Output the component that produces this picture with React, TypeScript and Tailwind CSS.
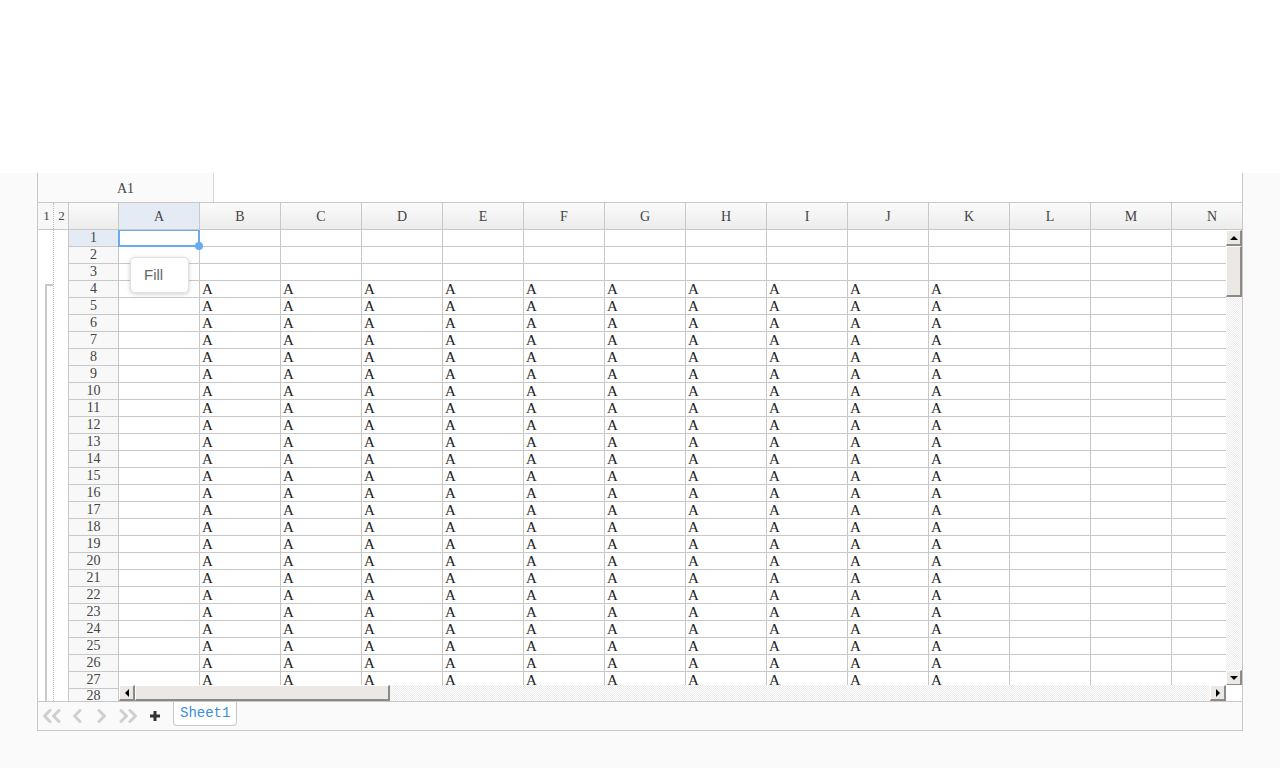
const cols = ["A", "B", "C", "D", "E", "F", "G", "H", "I", "J", "K", "L", "M", "N"];
const rows = Array.from({ length: 28 }, (_, i) => i + 1);

// B..K hold "A" from row 4 down (row 28 sits under the scrollbar)
const hasValue = (r: number, c: number) => r >= 4 && r <= 27 && c >= 1 && c <= 10;

const gridFont = "font-['Liberation_Serif',serif]";
const monoFont = "font-['Liberation_Mono',monospace]";

function ScrollButton({ dir }: { dir: "up" | "down" | "left" | "right" }) {
  const tri = {
    up: "border-x-[4px] border-x-transparent border-b-[4px] border-b-black",
    down: "border-x-[4px] border-x-transparent border-t-[4px] border-t-black",
    left: "border-y-[4px] border-y-transparent border-r-[4px] border-r-black",
    right: "border-y-[4px] border-y-transparent border-l-[4px] border-l-black",
  }[dir];
  return (
    <div className="w-[16px] h-[16px] shrink-0 flex items-center justify-center bg-[#ece9e4] border-t border-l border-t-white border-l-white border-r-2 border-b-2 border-r-[#8a8a8a] border-b-[#8a8a8a]">
      <div className={"w-0 h-0 " + tri} />
    </div>
  );
}

function Chevron({ dir, double }: { dir: "left" | "right"; double?: boolean }) {
  const w = double ? 19 : 10;
  const one = dir === "left" ? "M8 1.5 L2.5 7 L8 12.5" : "M2 1.5 L7.5 7 L2 12.5";
  const two = dir === "left" ? "M17 1.5 L11.5 7 L17 12.5" : "M11 1.5 L16.5 7 L11 12.5";
  return (
    <svg width={w} height={14} viewBox={`0 0 ${w} 14`} fill="none" stroke="#cfcfcf" strokeWidth={3} strokeLinecap="round" strokeLinejoin="round">
      <path d={one} />
      {double && <path d={two} />}
    </svg>
  );
}

export default function App() {
  return (
    <div className="min-h-screen bg-[#fafafa] font-['Liberation_Sans',sans-serif]">
      <div className="h-[173px] bg-white" />

      <div className="ml-[37px] w-[1206px] border-x border-b border-[#c8c8c8] bg-white overflow-hidden">
        {/* formula bar */}
        <div className="flex h-[30px] border-b border-[#c8c8c8]">
          <div className={"w-[176px] border-r border-[#d8d8d8] bg-[#fafafa] flex items-center justify-center pt-[1px] text-[14px] text-[#444] " + gridFont}>
            A1
          </div>
          <div className="flex-1" />
        </div>

        {/* column headers */}
        <div className={"flex h-[27px] border-b border-[#c8c8c8] text-[14px] text-[#444] " + gridFont}>
          <div className="w-[31px] shrink-0 flex border-r border-[#c8c8c8] bg-[#f7f7f7]">
            <div className="w-[16px] flex items-center justify-center pl-[2px] border-r border-dotted border-[#bbb] text-[13px]">1</div>
            <div className="w-[14px] flex items-center justify-center pl-[1px] text-[13px]">2</div>
          </div>
          <div className="w-[50px] shrink-0 border-r border-[#c8c8c8] bg-linear-to-b from-[#fbfbfb] to-[#ececec]" />
          {cols.map((c, i) => (
            <div
              key={c}
              className={
                "w-[81px] shrink-0 flex items-center justify-center border-r border-[#c8c8c8] " +
                (i === 0 ? "bg-[#e4ebf5]" : "bg-linear-to-b from-[#fbfbfb] to-[#ececec]")
              }
            >
              {c}
            </div>
          ))}
        </div>

        {/* grid body */}
        <div className={"relative flex h-[472px] border-b border-[#c8c8c8] overflow-hidden " + gridFont}>
          {/* outline column */}
          <div className="relative w-[31px] shrink-0 border-r border-[#c8c8c8] bg-white">
            <div className="absolute left-[15px] top-0 bottom-0 border-l border-dotted border-[#bbb]" />
            <div className="absolute left-[7px] top-[54px] bottom-0 w-[8px] border-l-2 border-t-2 border-[#c8c8c8]" />
          </div>

          <div className="flex flex-col">
            {rows.map((r) => (
              <div key={r} className="flex h-[17px] shrink-0 border-b border-[#c8c8c8]">
                <div
                  className={
                    "w-[50px] shrink-0 flex justify-center border-r border-[#c8c8c8] text-[14px] text-[#444] leading-none " +
                    (r === 1 ? "bg-[#e4ebf5] " : "bg-[#f8f8f8] ") +
                    (r === 28 ? "items-start pt-[0px]" : "items-center")
                  }
                >
                  {r}
                </div>
                {cols.map((c, ci) => (
                  <div key={c} className="w-[81px] shrink-0 flex items-end pl-[2px] border-r border-[#c8c8c8] text-[15px] leading-[15px] text-[#222]">
                    {hasValue(r, ci) ? "A" : ""}
                  </div>
                ))}
              </div>
            ))}
          </div>

          {/* active cell A1 */}
          <div className="absolute left-[80px] top-[-1px] w-[82px] h-[18px] border-2 border-[#6aabf0]" />
          <div className="absolute left-[157px] top-[12px] w-[8px] h-[8px] rounded-full bg-[#6aabf0]" />

          {/* fill popup */}
          <div className="absolute left-[92px] top-[27px] w-[59px] h-[36px] rounded-[5px] bg-white border border-[#e2e2e2] shadow-[0_1px_4px_rgba(0,0,0,0.2)] flex items-center pl-[13px] font-['Liberation_Sans',sans-serif] text-[15px] text-[#666]">
            Fill
          </div>

          {/* vertical scrollbar */}
          <div className="absolute right-0 top-0 w-[16px] h-[456px] flex flex-col bg-[repeating-conic-gradient(#ebebeb_0_25%,#ffffff_0_50%)] bg-[length:2px_2px]">
            <ScrollButton dir="up" />
            <div className="h-[51px] bg-[#ece9e4] border-t border-l border-t-white border-l-white border-r-2 border-b-2 border-r-[#8a8a8a] border-b-[#8a8a8a]" />
            <div className="flex-1" />
            <ScrollButton dir="down" />
          </div>

          {/* horizontal scrollbar */}
          <div className="absolute left-[81px] right-[16px] bottom-0 h-[16px] flex bg-[repeating-conic-gradient(#ebebeb_0_25%,#ffffff_0_50%)] bg-[length:2px_2px]">
            <ScrollButton dir="left" />
            <div className="w-[255px] bg-[#ece9e4] border-t border-l border-t-white border-l-white border-r-2 border-b-2 border-r-[#8a8a8a] border-b-[#8a8a8a]" />
            <div className="flex-1" />
            <ScrollButton dir="right" />
          </div>
          <div className="absolute right-0 bottom-0 w-[16px] h-[16px] bg-white" />
        </div>

        {/* sheet tabs */}
        <div className="flex h-[28px] items-start bg-[#fafafa]">
          <div className="flex items-center h-[28px] pl-[4px]">
            <Chevron dir="left" double />
            <div className="ml-[11px]"><Chevron dir="left" /></div>
            <div className="ml-[15px]"><Chevron dir="right" /></div>
            <div className="ml-[12px]"><Chevron dir="right" double /></div>
            <svg width={12} height={12} viewBox="0 0 12 12" className="ml-[11px]">
              <path d="M6 1 V11 M1 6 H11" stroke="#333" strokeWidth={3} />
            </svg>
          </div>
          <div className={"ml-[12px] h-[24px] px-[6px] flex items-center bg-white border border-t-0 border-[#c8c8c8] rounded-b-[4px] text-[14px] text-[#3a8ee0] " + monoFont}>
            Sheet1
          </div>
        </div>
      </div>
    </div>
  );
}
